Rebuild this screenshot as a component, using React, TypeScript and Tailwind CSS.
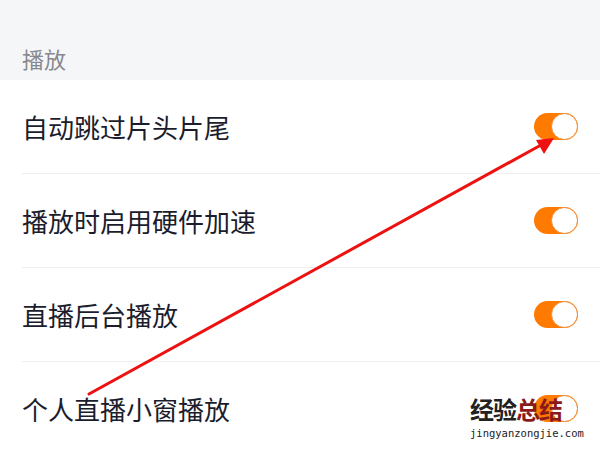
import React from 'react';

const items = ['自动跳过片头片尾', '播放时启用硬件加速', '直播后台播放', '个人直播小窗播放'];

const Toggle: React.FC = () => (
  <div className="relative w-[44px] h-[27px] rounded-full bg-[#ff7a00] shrink-0">
    <div className="absolute right-0 top-0 w-[27px] h-[27px] rounded-full bg-white border border-[#f08a33]" />
  </div>
);

export default function App() {
  return (
    <div
      className="relative w-[600px] h-[450px] overflow-hidden bg-white"
      style={{ fontFamily: '"Noto Sans CJK SC", "Noto Sans", sans-serif' }}
    >
      {/* Section header */}
      <div className="h-[80px] bg-[#f5f6f8] flex items-end pl-[22px] pb-[7px]">
        <span className="text-[22px] leading-[30px] text-[#86888e]">播放</span>
      </div>

      {/* Rows */}
      {items.map((label, i) => (
        <div key={i} className="flex flex-col">
          <div className="h-[93px] flex items-center justify-between pl-[22px] pr-[22px]">
            <span className="text-[26px] leading-[34px] text-[#1b1d2c]">{label}</span>
            <Toggle />
          </div>
          <div className="h-px ml-[22px] bg-[#efefef]" />
        </div>
      ))}

      {/* Annotation arrow */}
      <svg className="absolute inset-0 pointer-events-none" width="600" height="450" viewBox="0 0 600 450">
        <line x1="89" y1="394" x2="541" y2="145" stroke="#ee1111" strokeWidth="3" strokeLinecap="round" />
        <polygon points="554,138 536,140 544,154" fill="#ee1111" />
      </svg>

      {/* Watermark */}
      <div className="absolute left-[470px] top-[396px] flex flex-col items-start">
        <div className="flex text-[24px] leading-[26px] font-bold tracking-[-1px]">
          <span className="text-[#222]">经验</span>
          <span className="text-[#8b1a1a]">总结</span>
        </div>
        <span
          className="mt-[4px] text-[10.5px] leading-[14px] text-[#222]"
          style={{ fontFamily: '"DejaVu Sans Mono", monospace' }}
        >
          jingyanzongjie.com
        </span>
      </div>
    </div>
  );
}
